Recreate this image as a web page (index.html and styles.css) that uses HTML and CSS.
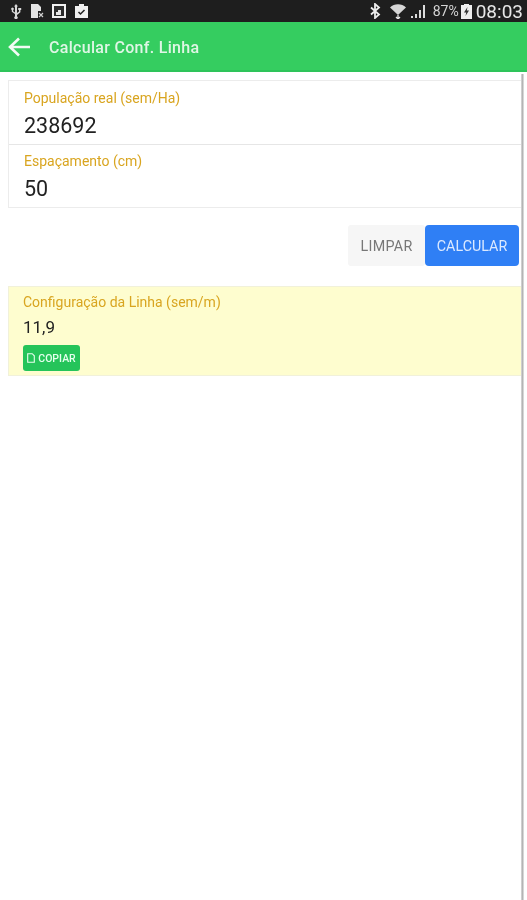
FILE: index.html
```html
<!DOCTYPE html>
<html lang="pt">
<head>
<meta charset="utf-8">
<title>Calcular Conf. Linha</title>
<link rel="stylesheet" href="styles.css">
</head>
<body>
<div class="statusbar">
  <div class="status-left">
    <svg class="si" width="14" height="16" viewBox="0 0 14 16"><path d="M7 1l2 2.500H8V10l2-1.500V7H9.200V5h3v2h-.8v2.200L8 12v1.200a1.700 1.700 0 1 1-2 0V11L2.800 8.800V7a1.300 1.300 0 1 1 1.400 0v1.200L6 9.500V3.500H5z" fill="#d8d8d8"/></svg>
    <svg class="si" width="14" height="16" viewBox="0 0 14 16"><path d="M1 1h7l3 3v4H8v7H1z" fill="#e4e4e4"/><path d="M9 10l4 4m0-4l-4 4" stroke="#cfcfcf" stroke-width="1.200"/></svg>
    <svg class="si" width="16" height="16" viewBox="0 0 16 16"><rect x="1" y="1" width="14" height="14" fill="#f0f0f0"/><rect x="3" y="3" width="10" height="10" fill="#2c2c2c"/><path d="M5 12V9h2V7h3v5z" fill="#e8e8e8"/></svg>
    <svg class="si" width="15" height="16" viewBox="0 0 15 16"><path d="M1 3h4V1h5v2h4v12H1z" fill="#f0f0f0"/><path d="M4.500 9l2 2 4-4" stroke="#222" stroke-width="1.500" fill="none"/></svg>
  </div>
  <div class="status-right">
    <svg class="si" width="12" height="16" viewBox="0 0 12 16"><path d="M2 4.500l8 7L6 15V1l4 3.500-8 7" fill="none" stroke="#ececec" stroke-width="1.800"/></svg>
    <svg class="si wifi" width="18" height="16" viewBox="0 0 18 16"><path d="M1 4.500a11.500 11.500 0 0 1 16 0L9 12z" fill="#d6d6d6"/><path d="M9 12v3M7 14l2 2 2-2" stroke="#e8e8e8" stroke-width="1.300" fill="none"/></svg>
    <svg class="si signal" width="16" height="16" viewBox="0 0 16 16"><path d="M1 13h2v2H1zM5 11h2v4H5zM9 7h2v8H9zM13 2h2v13h-2z" fill="#dcdcdc"/></svg>
    <span class="batt-pct">87%</span>
    <svg class="si batt" width="11" height="16" viewBox="0 0 11 16"><path d="M3 2V1h5v1h3v14H0V2z" fill="#efefef"/><path d="M6.500 4L3 9.500h2.200L4.500 13 8 7.500H5.800z" fill="#333"/></svg>
    <span class="clock">08:03</span>
  </div>
</div>
<header class="appbar">
  <svg class="back" width="24" height="24" viewBox="0 0 24 24"><path d="M23 12H3M12 3.500L3 12l9 8.500" fill="none" stroke="#f2fbf4" stroke-width="2.600"/></svg>
  <h1 class="title">Calcular Conf. Linha</h1>
</header>
<main class="content">
  <section class="form-card">
    <div class="field">
      <div class="label">População real (sem/Ha)</div>
      <div class="value">238692</div>
    </div>
    <div class="field">
      <div class="label">Espaçamento (cm)</div>
      <div class="value">50</div>
    </div>
  </section>
  <div class="actions">
    <button class="btn btn-clear">LIMPAR</button>
    <button class="btn btn-calc">CALCULAR</button>
  </div>
  <section class="result">
    <div class="label">Configuração da Linha (sem/m)</div>
    <div class="result-value">11,9</div>
    <button class="btn-copy">
      <svg width="8" height="10" viewBox="0 0 8 10"><path d="M.7.700h4.500l2.100 2.100v6.500H.7z" fill="none" stroke="#eafff0" stroke-width="1.100"/></svg>
      COPIAR
    </button>
  </section>
</main>
<div class="scroll-edge"></div>
</body>
</html>
```
FILE: styles.css
```css
* { box-sizing: border-box; }
html, body { margin: 0; height: 100%; }
body {
  position: relative;
  width: 527px;
  background: #fff;
  font-family: Roboto, "Liberation Sans", sans-serif;
  overflow: hidden;
  filter: blur(.45px);
}
.statusbar {
  height: 22px;
  background: #1e1e1e;
  display: flex;
  align-items: center;
  justify-content: space-between;
  padding: 0 4px 0 9px;
  color: #e8e8e8;
}
.status-left, .status-right { display: flex; align-items: center; }
.status-left { gap: 7px; }
.status-right { gap: 5px; }
.si { display: block; }
.wifi { margin-left: 3px; }
.signal { margin-left: -2px; }
.batt-pct { font-size: 14px; color: #d4d4d4; margin-left: 2px; }
.batt { margin-left: -3px; margin-right: -1px; }
.clock { font-size: 19px; color: #e6e6e6; }
.appbar {
  height: 50px;
  background: #35cd60;
  border-bottom: 2px solid #2ec45a;
  display: flex;
  align-items: center;
  padding: 2px 0 0 7px;
}
.back { flex: none; }
.title {
  margin: 0 0 0 18px;
  font-size: 16px;
  font-weight: 500;
  color: #dff6e5;
  letter-spacing: .3px;
}
.content { padding: 8px 5px 0 8px; }
.form-card {
  border: 1px solid #ececec;
  background: #fff;
}
.field { height: 63px; padding: 9px 15px 0; }
.field + .field { border-top: 1px solid #e6e6e6; padding-top: 8px; }
.label {
  font-size: 14px;
  line-height: 17px;
  color: #d9a520;
}
.value {
  font-size: 21.500px;
  line-height: 28px;
  margin-top: 5px;
  color: #222;
}
.actions {
  display: flex;
  justify-content: flex-end;
  margin-top: 17px;
  padding-right: 3px;
}
.btn {
  border: 0;
  height: 41px;
  font-family: inherit;
  font-size: 14.300px;
  padding: 0;
}
.btn-clear { width: 77px; background: #f6f6f6; color: #777; border-radius: 3px; letter-spacing: .3px; }
.btn-calc { width: 94px; background: #2f7ff5; color: #dbe9ff; border-radius: 4px; }
.result {
  margin-top: 20px;
  height: 90px;
  background: #fefdcf;
  border: 1px solid #f1f1da;
  padding: 7px 15px 0 14px;
}
.result-value {
  font-size: 17px;
  line-height: 22px;
  margin-top: 5px;
  color: #222;
}
.btn-copy {
  display: flex;
  align-items: center;
  justify-content: center;
  gap: 3px;
  width: 57px;
  height: 26px;
  margin-top: 7px;
  padding: 0;
  border: 0;
  border-radius: 3px;
  background: #25c45a;
  color: #e6ffee;
  font-family: inherit;
  font-size: 10.500px;
  font-weight: 500;
}
.scroll-edge {
  position: absolute;
  top: 74px;
  bottom: 0;
  left: 521px;
  width: 3px;
  background: linear-gradient(90deg, #dcdcdc, #b4b4b4 50%, #e8e8e8);
}
```
